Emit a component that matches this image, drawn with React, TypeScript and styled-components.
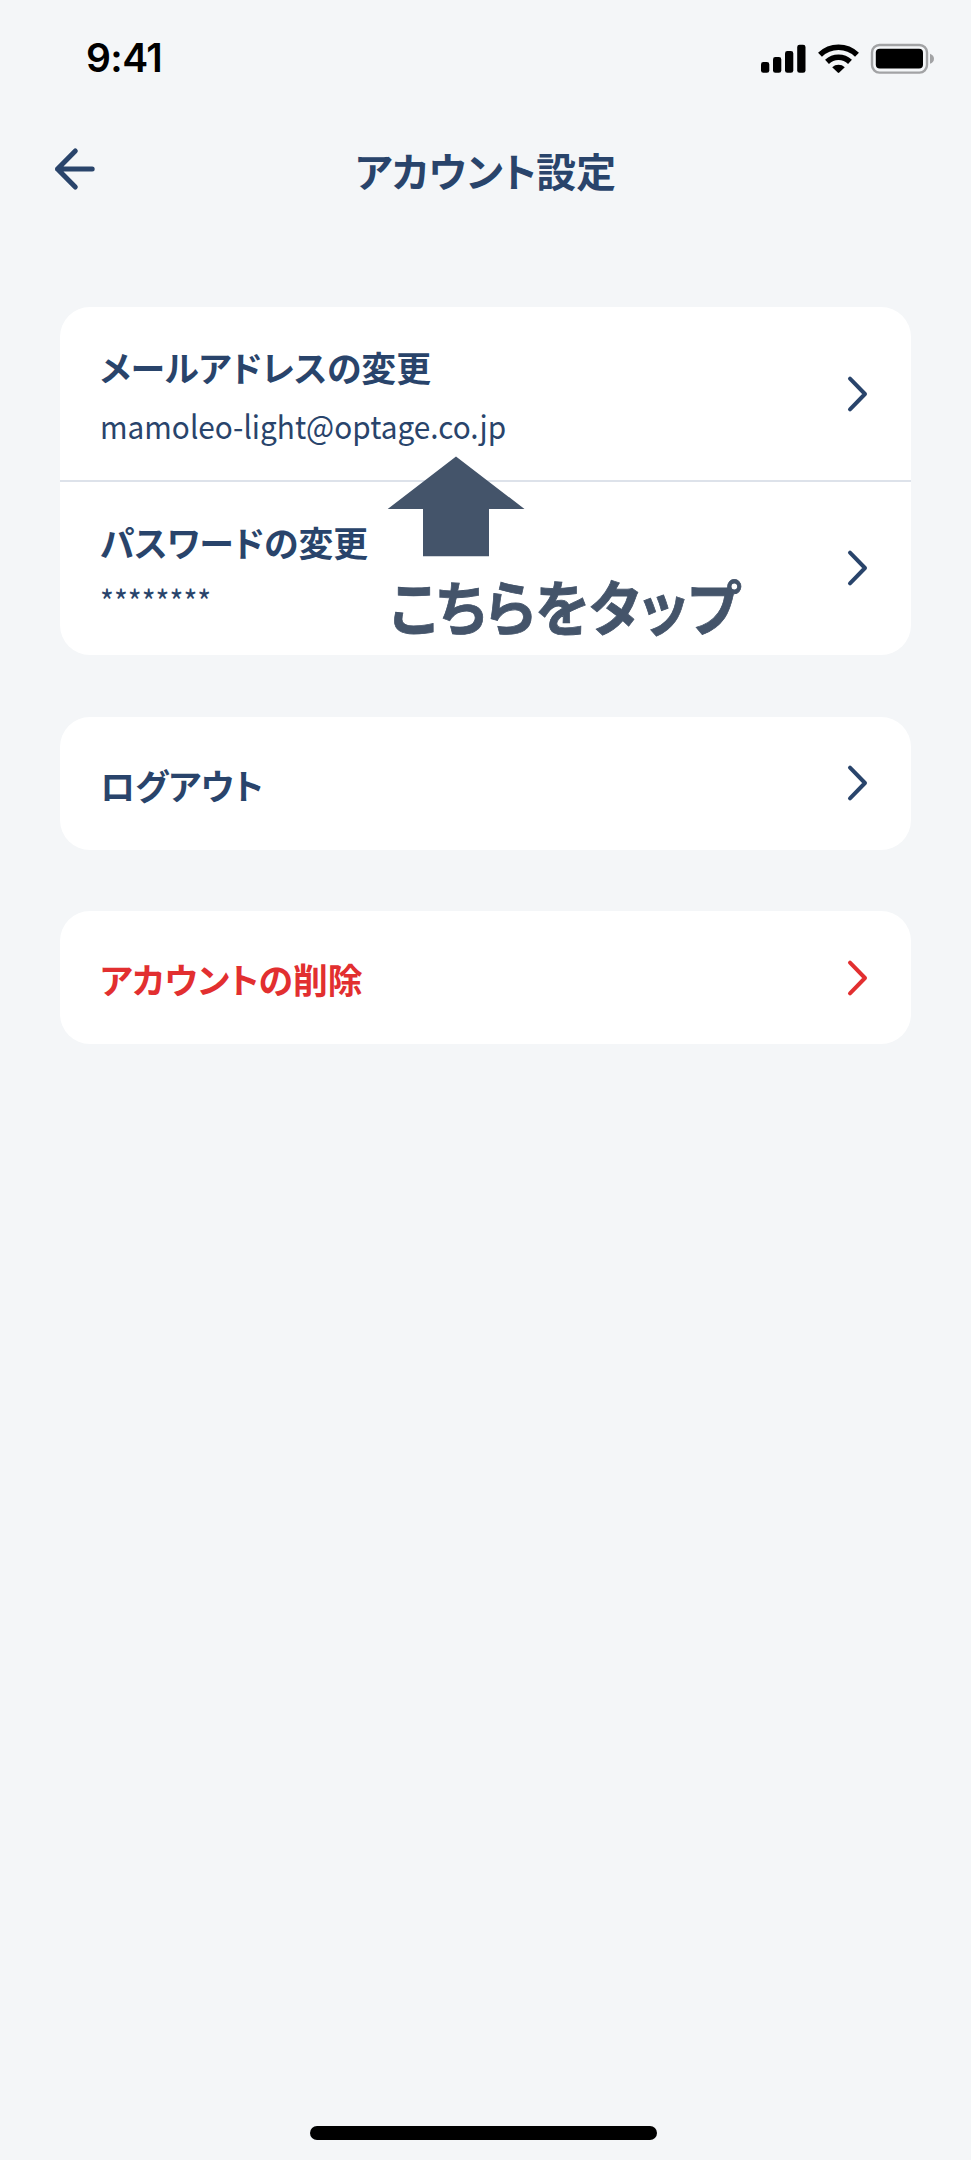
import React from 'react';
import styled, { createGlobalStyle } from 'styled-components';

const navy = '#29446b';
const red = '#e22f30';
const slate = '#44546a';

const GlobalStyle = createGlobalStyle`
  *, *::before, *::after { box-sizing: border-box; }
  body {
    margin: 0;
    background: #f4f6f8;
    font-family: "Noto Sans CJK JP", sans-serif;
    color: ${navy};
  }
`;

const Screen = styled.div`
  display: flex;
  flex-direction: column;
  width: 971px;
  height: 2160px;
  background: #f4f6f8;
`;

const StatusBar = styled.header`
  display: flex;
  align-items: center;
  justify-content: space-between;
  height: 117px;
  padding: 0 37px 0 86px;
`;

const Clock = styled.time`
  margin-top: -2px;
  font: 600 39px/40px Inter, sans-serif;
  letter-spacing: -0.6px;
  color: #000;
`;

const StatusIcons = styled.svg`
  display: block;
  width: 174px;
  height: 31px;
`;

const NavBar = styled.nav`
  display: grid;
  grid-template-columns: 50px 1fr 50px;
  align-items: center;
  height: 105px;
  padding: 0 50px;
`;

const BackButton = styled.button`
  display: flex;
  width: 50px;
  height: 50px;
  margin-top: -1px;
  padding: 0;
  border: 0;
  background: none;
  color: inherit;
`;

const Title = styled.h1`
  margin: 0;
  font-size: 39.8px;
  line-height: 60px;
  font-weight: 700;
  text-align: center;
  font-feature-settings: "palt";
`;

const List = styled.main`
  display: flex;
  flex: 1;
  flex-direction: column;
  gap: 61.5px;
  padding: 85px 60px 0;
`;

const Card = styled.section`
  position: relative;
  border-radius: 30px;
  background: #fff;
`;

const Row = styled.div<{ $single?: boolean; $danger?: boolean }>`
  display: flex;
  align-items: center;
  justify-content: space-between;
  height: ${(p) => (p.$single ? '133px' : '173px')};
  padding: ${(p) => (p.$single ? '0 40px' : '5px 40px 0')};
  color: ${(p) => (p.$danger ? red : navy)};

  & + & {
    height: 175px;
    padding-top: 4px;
    border-top: 2px solid #dde2ea;
  }
`;

const RowText = styled.div`
  display: flex;
  flex-direction: column;
  gap: 8px;
`;

const Label = styled.span<{ $single?: boolean }>`
  font-size: 34.85px;
  line-height: 50px;
  font-weight: 700;
  white-space: nowrap;
  padding-top: ${(p) => (p.$single ? '3px' : '0')};
  font-feature-settings: "palt";
`;

const Value = styled.span`
  font-size: 32px;
  line-height: 50px;
  white-space: nowrap;
  transform: scaleX(0.93);
  transform-origin: left;
`;

const ChevronIcon = styled.svg<{ $raised?: boolean }>`
  display: block;
  width: 24px;
  height: 40px;
  margin-top: ${(p) => (p.$raised ? '-5px' : '0')};
`;

const Callout = styled.div`
  position: absolute;
  left: 327px;
  top: 149px;
  width: 360px;
  color: ${slate};
  pointer-events: none;
`;

const CalloutArrow = styled.svg`
  display: block;
  width: 138px;
  height: 101px;
`;

const CalloutText = styled.div`
  margin: 6px 0 0 3px;
  font-size: 60px;
  line-height: 84px;
  font-weight: 700;
  white-space: nowrap;
  font-feature-settings: "palt";
  -webkit-text-stroke: 0.8px currentColor;
  transform: scaleX(0.935);
  transform-origin: left;
`;

const HomeArea = styled.footer`
  display: flex;
  justify-content: center;
  height: 34px;
  padding-right: 4px;
`;

const HomeIndicator = styled.div`
  width: 347px;
  height: 14px;
  border-radius: 7px;
  background: #000;
`;

function Chevron({ raised }: { raised?: boolean }) {
  return (
    <ChevronIcon $raised={raised} viewBox="0 0 24 40" fill="none" stroke="currentColor" strokeWidth="4" strokeLinecap="round" strokeLinejoin="round">
      <path d="M3 4.7 18 20 3 35.3" />
    </ChevronIcon>
  );
}

export default function App() {
  return (
    <>
      <GlobalStyle />
      <Screen>
        <StatusBar>
          <Clock>9:41</Clock>
          <StatusIcons viewBox="0 0 174 31">
            <rect x="1" y="19" width="8.3" height="10.8" rx="2.4" />
            <rect x="13" y="14" width="8.3" height="15.8" rx="2.4" />
            <rect x="25" y="8" width="8.3" height="21.8" rx="2.4" />
            <rect x="37.2" y="1.7" width="8.3" height="28.1" rx="2.4" />
            <g fill="none" stroke="#000" strokeWidth="5.6">
              <path d="M60 11.7a26.6 26.6 0 0 1 37 0" />
              <path d="M67 18.9a16.7 16.7 0 0 1 23 0" />
            </g>
            <path d="M72.2 24.3a9.3 9.3 0 0 1 12.6 0l-5.5 5.2a1.1 1.1 0 0 1-1.6 0z" />
            <rect x="112" y="2" width="55" height="27.6" rx="7.5" fill="none" stroke="#a2a3a5" strokeWidth="2.4" />
            <rect x="115.8" y="5.8" width="47.2" height="19.6" rx="4" />
            <path d="M170 10.8q4 1.5 4 5t-4 5z" fill="#a2a3a5" />
          </StatusIcons>
        </StatusBar>
        <NavBar>
          <BackButton aria-label="戻る">
            <svg width="50" height="50" viewBox="0 0 50 50" fill="none" stroke="currentColor" strokeWidth="5" strokeLinecap="round" strokeLinejoin="round">
              <path d="M42.2 25H7.5M25.3 7 7.5 25l17.8 18" />
            </svg>
          </BackButton>
          <Title>アカウント設定</Title>
        </NavBar>
        <List>
          <Card>
            <Row>
              <RowText>
                <Label>メールアドレスの変更</Label>
                <Value>mamoleo-light@optage.co.jp</Value>
              </RowText>
              <Chevron raised />
            </Row>
            <Row>
              <RowText>
                <Label>パスワードの変更</Label>
                <Value>********</Value>
              </RowText>
              <Chevron raised />
            </Row>
            <Callout>
              <CalloutArrow viewBox="0 0 138 101" fill="currentColor">
                <path d="M69 .5 137.5 53H102v47.2H36V53H.7z" />
              </CalloutArrow>
              <CalloutText>こちらをタップ</CalloutText>
            </Callout>
          </Card>
          <Card>
            <Row $single>
              <Label $single>ログアウト</Label>
              <Chevron />
            </Row>
          </Card>
          <Card>
            <Row $single $danger>
              <Label $single>アカウントの削除</Label>
              <Chevron />
            </Row>
          </Card>
        </List>
        <HomeArea>
          <HomeIndicator />
        </HomeArea>
      </Screen>
    </>
  );
}
